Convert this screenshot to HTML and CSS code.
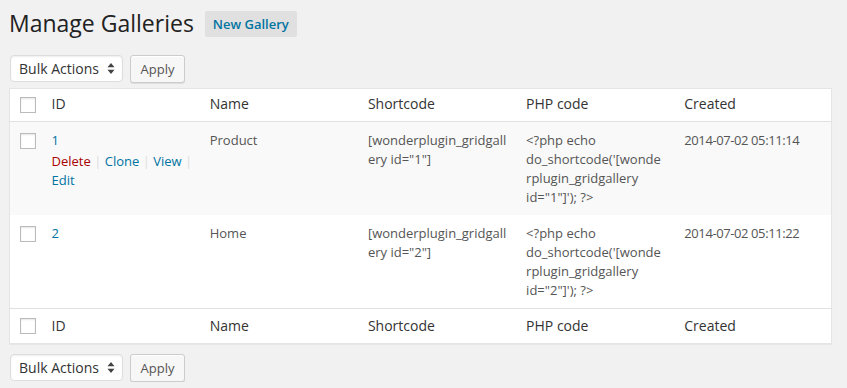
FILE: index.html
```html
<!DOCTYPE html>
<html lang="en">
<head>
    <meta charset="UTF-8">
    <title>Manage Galleries</title>
    <link rel="stylesheet" href="styles.css">
</head>
<body>
    <div class="wrap">
        <div class="title-row">
            <h2>Manage Galleries</h2>
            <a class="add-new" href="">New Gallery</a>
        </div>

        <div class="tablenav top">
            <div class="select">
                <span>Bulk Actions</span>
                <svg width="8" height="11" viewBox="0 0 8 11"><path d="M4 0 L7.5 4.2 H0.5 Z M4 11 L7.5 6.8 H0.5 Z" fill="#444"/></svg>
            </div>
            <button class="button">Apply</button>
        </div>

        <table class="widefat">
            <colgroup>
                <col class="col-check">
                <col><col><col><col><col class="col-last">
            </colgroup>
            <thead>
                <tr>
                    <th class="check"><input type="checkbox"></th>
                    <th>ID</th>
                    <th>Name</th>
                    <th>Shortcode</th>
                    <th>PHP code</th>
                    <th>Created</th>
                </tr>
            </thead>
            <tbody>
                <tr class="alt">
                    <td class="check"><input type="checkbox"></td>
                    <td class="id">
                        <a href="">1</a>
                        <div class="row-actions">
                            <a class="delete" href="">Delete</a>&nbsp;<span class="sep">|</span>
                            <a href="">Clone</a>&nbsp;<span class="sep">|</span>
                            <a href="">View</a>&nbsp;<span class="sep">|</span>
                            <a href="">Edit</a>
                        </div>
                    </td>
                    <td>Product</td>
                    <td class="shortcode">[wonderplugin_gridgallery id="1"]</td>
                    <td>&lt;?php echo do_shortcode('[wonderplugin_gridgallery id="1"]'); ?&gt;</td>
                    <td class="date">2014-07-02 05:11:14</td>
                </tr>
                <tr>
                    <td class="check"><input type="checkbox"></td>
                    <td class="id"><a href="">2</a></td>
                    <td>Home</td>
                    <td class="shortcode">[wonderplugin_gridgallery id="2"]</td>
                    <td>&lt;?php echo do_shortcode('[wonderplugin_gridgallery id="2"]'); ?&gt;</td>
                    <td class="date">2014-07-02 05:11:22</td>
                </tr>
            </tbody>
            <tfoot>
                <tr>
                    <th class="check"><input type="checkbox"></th>
                    <th>ID</th>
                    <th>Name</th>
                    <th>Shortcode</th>
                    <th>PHP code</th>
                    <th>Created</th>
                </tr>
            </tfoot>
        </table>

        <div class="tablenav bottom">
            <div class="select">
                <span>Bulk Actions</span>
                <svg width="8" height="11" viewBox="0 0 8 11"><path d="M4 0 L7.5 4.2 H0.5 Z M4 11 L7.5 6.8 H0.5 Z" fill="#444"/></svg>
            </div>
            <button class="button">Apply</button>
        </div>
    </div>
</body>
</html>
```

FILE: styles.css
```css
body {
    margin: 0;
    background-color: #f1f1f1;
    font-family: "Open Sans", sans-serif;
    font-size: 13px;
    color: #444;
}
a {
    color: #0074a2;
    text-decoration: none;
}
.wrap {
    padding: 0 15px 0 9px;
}
.title-row {
    display: flex;
    align-items: center;
    padding-top: 9px;
}
h2 {
    margin: 0;
    font-size: 23px;
    font-weight: 400;
    line-height: 29px;
    color: #222;
}
.add-new {
    margin-left: 11px;
    height: 26px;
    line-height: 26px;
    padding: 0 8px;
    background-color: #e0e0e0;
    font-size: 13px;
    font-weight: 600;
    border-radius: 2px;
}
.tablenav {
    display: flex;
    gap: 7px;
    padding-left: 1px;
}
.tablenav.top {
    margin-top: 17px;
    margin-bottom: 5px;
}
.tablenav.bottom {
    margin-top: 10px;
}
.select {
    box-sizing: border-box;
    width: 113px;
    height: 27px;
    display: flex;
    align-items: center;
    justify-content: space-between;
    padding: 0 7px 0 8px;
    background-color: #fff;
    border: 1px solid #ddd;
    border-radius: 4px;
    box-shadow: inset 0 1px 2px rgba(0, 0, 0, 0.07);
    font-size: 14px;
    color: #333;
}
.button {
    box-sizing: border-box;
    width: 55px;
    height: 28px;
    padding: 0;
    background-color: #f7f7f7;
    border: 1px solid #ccc;
    border-radius: 3px;
    box-shadow: inset 0 1px 0 #fff, 0 1px 0 rgba(0, 0, 0, 0.08);
    font-family: "Open Sans", sans-serif;
    font-size: 13px;
    color: #555;
}
.widefat {
    width: 823px;
    table-layout: fixed;
    border-collapse: collapse;
    background-color: #fff;
    border: 1px solid #e5e5e5;
    box-shadow: 0 1px 1px rgba(0, 0, 0, 0.04);
}
.widefat col {
    width: 158px;
}
.widefat col.col-check {
    width: 32px;
}
.widefat col.col-last {
    width: 157px;
}
.widefat th {
    text-align: left;
    font-weight: 400;
    font-size: 14px;
    line-height: 20px;
    color: #333;
    padding: 5px 10px 7px;
}
.widefat thead th {
    border-bottom: 1px solid #e1e1e1;
}
.widefat tfoot th {
    border-top: 1px solid #e1e1e1;
    padding: 7px 10px 7px;
}
.widefat td {
    vertical-align: top;
    line-height: 19px;
    padding: 9px 10px 8px;
    color: #555;
    overflow-wrap: break-word;
}
.widefat td.id {
    padding-right: 2px;
}
.widefat td.shortcode {
    padding-right: 5px;
}
.widefat td.date {
    letter-spacing: -0.4px;
}
.widefat tr.alt {
    background-color: #f9f9f9;
}
.widefat .check {
    padding: 0 0 0 10px;
    vertical-align: middle;
}
.widefat td.check {
    vertical-align: top;
    padding-top: 11px;
}
input[type="checkbox"] {
    appearance: none;
    display: block;
    margin: 0;
    width: 16px;
    height: 16px;
    background-color: #fff;
    border: 1px solid #bbb;
    box-shadow: inset 0 1px 2px rgba(0, 0, 0, 0.1);
}
.row-actions {
    padding-top: 2px;
}
.row-actions .delete {
    color: #a00;
}
.sep {
    color: #ddd;
}
```
